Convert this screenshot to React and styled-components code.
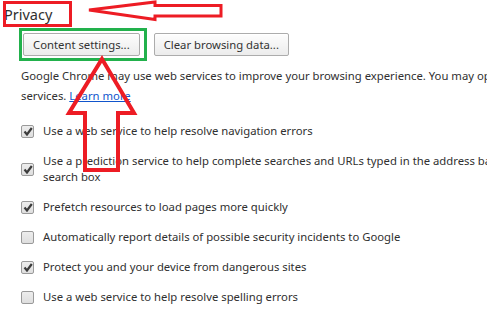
import styled, { createGlobalStyle } from "styled-components";

const GlobalStyle = createGlobalStyle`
  html, body {
    margin: 0;
    padding: 0;
    background: #fff;
  }
  body {
    font-family: "Noto Sans", "Open Sans", sans-serif;
    color: #303030;
  }
`;

const Page = styled.div`
  position: relative;
  width: 487px;
  height: 313px;
  overflow: hidden;
`;

const Section = styled.div`
  padding: 4px 0 0 4px;
`;

const Title = styled.h3`
  margin: 0;
  font-size: 14.5px;
  font-weight: normal;
  line-height: 20px;
  color: #303030;
`;

const ButtonRow = styled.div`
  display: flex;
  gap: 14px;
  margin: 9px 0 0 19px;
`;

const Button = styled.button`
  height: 23px;
  padding: 0 9px;
  font-family: inherit;
  font-size: 11.3px;
  color: #333;
  border: 1px solid #acacac;
  border-radius: 2px;
  background: linear-gradient(#fdfdfd, #ececec);
  box-shadow: inset 0 1px 0 #fff;
  white-space: nowrap;
`;

const Body = styled.div`
  margin: 10px 0 0 17px;
  width: 700px;
`;

const Para = styled.p`
  margin: 0;
  font-size: 11.3px;
  line-height: 20px;
  white-space: nowrap;
`;

const Link = styled.a`
  color: #1155cc;
  text-decoration: underline;
`;

const List = styled.div`
  display: flex;
  flex-direction: column;
  gap: 14px;
  margin-top: 17px;
`;

const Item = styled.label`
  display: flex;
  align-items: center;
  gap: 9px;
  font-size: 11.3px;
  line-height: 16px;
  white-space: nowrap;
`;

const Box = styled.span`
  flex: none;
  width: 11px;
  height: 11px;
  border: 1px solid #9a9a9a;
  border-radius: 2px;
  background: linear-gradient(#ededed, #dedede);
  display: flex;
  align-items: center;
  justify-content: center;
`;

const Overlay = styled.svg`
  position: absolute;
  left: 0;
  top: 0;
  pointer-events: none;
`;

function Check({ on }) {
  return (
    <Box>
      {on && (
        <svg width="10" height="9" viewBox="0 0 10 9">
          <path d="M1.5 4.5 L4 7.5 L8.8 1" fill="none" stroke="#3c3c3c" strokeWidth="2.2" />
        </svg>
      )}
    </Box>
  );
}

const items = [
  { on: true, text: ["Use a web service to help resolve navigation errors"] },
  {
    on: true,
    text: [
      "Use a prediction service to help complete searches and URLs typed in the address bar",
      "search box",
    ],
  },
  { on: true, text: ["Prefetch resources to load pages more quickly"] },
  { on: false, text: ["Automatically report details of possible security incidents to Google"] },
  { on: true, text: ["Protect you and your device from dangerous sites"] },
  { on: false, text: ["Use a web service to help resolve spelling errors"] },
];

export default function App() {
  return (
    <>
      <GlobalStyle />
      <Page>
        <Section>
          <Title>Privacy</Title>
          <ButtonRow>
            <Button>Content settings...</Button>
            <Button>Clear browsing data...</Button>
          </ButtonRow>
          <Body>
            <Para>
              Google Chrome may use web services to improve your browsing experience. You may optionally disable these
              <br />
              services. <Link href="#">Learn more</Link>
            </Para>
            <List>
              {items.map((it, i) => (
                <Item key={i}>
                  <Check on={it.on} />
                  <span>
                    {it.text.map((t, j) => (
                      <div key={j}>{t}</div>
                    ))}
                  </span>
                </Item>
              ))}
            </List>
          </Body>
        </Section>
        <Overlay width="487" height="313">
          <rect x="4.5" y="2.5" width="66" height="23" fill="none" stroke="#ed1c24" strokeWidth="3" />
          <polygon
            points="89,10 155,2 155,5.5 221,5.5 221,16 155,16 155,19.5"
            fill="#fff"
            stroke="#ed1c24"
            strokeWidth="3"
            strokeLinejoin="miter"
          />
          <rect x="20.5" y="29.5" width="125" height="30" fill="none" stroke="#22b14c" strokeWidth="3" />
          <polygon
            points="102,59 134,113 118,113 118,170 85,170 85,113 69,113"
            fill="none"
            stroke="#ed1c24"
            strokeWidth="4"
          />
        </Overlay>
      </Page>
    </>
  );
}
